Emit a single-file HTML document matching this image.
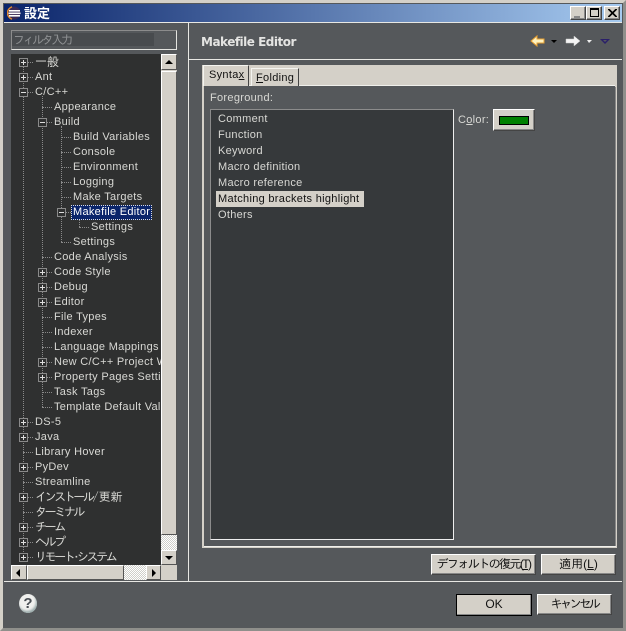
<!DOCTYPE html>
<html><head><meta charset="utf-8">
<style>
html,body{margin:0;padding:0;width:626px;height:631px;overflow:hidden;background:#55585b}
body{position:relative;font:12px "Liberation Sans","IPAGothic","Noto Sans CJK JP",sans-serif;color:#d8d8d4}
div{position:absolute;box-sizing:border-box}
.t{white-space:nowrap;height:15px;line-height:15px;font-size:11px;letter-spacing:.3px;margin-top:1px}
.k{letter-spacing:-2.4px;font-size:12px;font-family:"IPAGothic","Noto Sans CJK JP",sans-serif}
.j{letter-spacing:0;font-size:12px;font-family:"IPAGothic","Noto Sans CJK JP",sans-serif}
.btn{background:#d4d0c8;color:#111;text-align:center;white-space:nowrap;border:1px solid;border-color:#fff #444 #444 #fff;box-shadow:inset -1px -1px 0 #888}
.pm{width:9px;height:9px;border:1px solid #8a8a8a;background:#2f3030}
.pm:before{content:"";position:absolute;left:1px;top:3px;width:5px;height:1px;background:#ddd}
.pm.p:after{content:"";position:absolute;left:3px;top:1px;width:1px;height:5px;background:#ddd}
.h{height:1px;border-top:1px dotted #8a8a8a}
.v{width:1px;border-left:1px dotted #8a8a8a}
.sb{background:#d4d0c8;border:1px solid;border-color:#fff #555 #555 #fff}
u{text-decoration:underline}
</style></head><body>
<!-- frame -->
<div style="left:0;top:0;width:626px;height:631px;border:3px solid #d4d0c8;border-right-color:#8f8f8b;border-bottom-color:#8f8f8b"></div>
<div style="left:4px;top:4px;width:618px;height:18px;background:linear-gradient(90deg,#0a246a,#a6caf0)"></div>
<div style="left:4px;top:22px;width:618px;height:1px;background:#e8e8e4"></div>
<svg style="position:absolute;left:7px;top:6px" width="14" height="14" viewBox="0 0 14 14"><circle cx="7" cy="7" r="6.5" fill="#3a2a55"/><path d="M5 .8A6.5 6.5 0 0 0 5 13.2" stroke="#e08a30" stroke-width="1.4" fill="none"/><rect x="2" y="4" width="11" height="1.6" fill="#fff"/><rect x="1.5" y="6.5" width="12" height="1.6" fill="#fff"/><rect x="2" y="9" width="11" height="1.6" fill="#fff"/></svg>
<div style="left:24px;top:5px;height:16px;line-height:16px;font-size:13px;font-weight:bold;color:#fff;font-family:'Noto Sans CJK JP',sans-serif">設定</div>
<div class="btn" style="left:570px;top:6px;width:16px;height:14px"><div style="left:3px;top:9px;width:6px;height:2px;background:#888"></div></div>
<div class="btn" style="left:586px;top:6px;width:16px;height:14px"><div style="left:3px;top:1px;width:9px;height:9px;border:1px solid #000;border-top-width:2px"></div></div>
<div class="btn" style="left:604px;top:6px;width:16px;height:14px"><svg style="position:absolute;left:3px;top:2px" width="9" height="8"><path d="M0 0L8 8M1 0L9 8M8 0L0 8M9 0L1 8" stroke="#000" stroke-width="1"/></svg></div>

<!-- filter -->
<div style="left:11px;top:30px;width:166px;height:20px;border:1px solid;border-color:#8c8c8c #e4e4e0 #e4e4e0 #8c8c8c;background:#55585b"></div>
<div style="left:12px;top:33px;width:142px;height:13px;background:#484b4e"></div>
<div class="t" style="left:13px;top:32px;color:#8e9092"><span class="k">フィルタ入力</span></div>

<!-- tree -->
<div style="left:11px;top:54px;width:150px;height:511px;background:#2f3030"></div>
<div class="v" style="left:23px;top:66px;height:494px"></div>
<div class="v" style="left:42px;top:96px;height:311px"></div>
<div class="v" style="left:61px;top:126px;height:116px"></div>
<div class="v" style="left:79px;top:217px;height:10px"></div>
<div class="h" style="left:28px;top:62px;width:5px"></div>
<div class="h" style="left:28px;top:77px;width:5px"></div>
<div class="h" style="left:28px;top:92px;width:5px"></div>
<div class="h" style="left:42px;top:107px;width:10px"></div>
<div class="h" style="left:47px;top:122px;width:5px"></div>
<div class="h" style="left:61px;top:137px;width:10px"></div>
<div class="h" style="left:61px;top:152px;width:10px"></div>
<div class="h" style="left:61px;top:167px;width:10px"></div>
<div class="h" style="left:61px;top:182px;width:10px"></div>
<div class="h" style="left:61px;top:197px;width:10px"></div>
<div class="h" style="left:66px;top:212px;width:5px"></div>
<div class="h" style="left:79px;top:227px;width:10px"></div>
<div class="h" style="left:61px;top:242px;width:10px"></div>
<div class="h" style="left:42px;top:257px;width:10px"></div>
<div class="h" style="left:47px;top:272px;width:5px"></div>
<div class="h" style="left:47px;top:287px;width:5px"></div>
<div class="h" style="left:47px;top:302px;width:5px"></div>
<div class="h" style="left:42px;top:317px;width:10px"></div>
<div class="h" style="left:42px;top:332px;width:10px"></div>
<div class="h" style="left:42px;top:347px;width:10px"></div>
<div class="h" style="left:47px;top:362px;width:5px"></div>
<div class="h" style="left:47px;top:377px;width:5px"></div>
<div class="h" style="left:42px;top:392px;width:10px"></div>
<div class="h" style="left:42px;top:407px;width:10px"></div>
<div class="h" style="left:28px;top:422px;width:5px"></div>
<div class="h" style="left:28px;top:437px;width:5px"></div>
<div class="h" style="left:23px;top:452px;width:10px"></div>
<div class="h" style="left:28px;top:467px;width:5px"></div>
<div class="h" style="left:23px;top:482px;width:10px"></div>
<div class="h" style="left:28px;top:497px;width:5px"></div>
<div class="h" style="left:23px;top:512px;width:10px"></div>
<div class="h" style="left:28px;top:527px;width:5px"></div>
<div class="h" style="left:28px;top:542px;width:5px"></div>
<div class="h" style="left:28px;top:557px;width:5px"></div>

<div class="pm p" style="left:19px;top:58px"></div>
<div class="pm p" style="left:19px;top:73px"></div>
<div class="pm" style="left:19px;top:88px"></div>
<div class="pm" style="left:38px;top:118px"></div>
<div class="pm" style="left:57px;top:208px"></div>
<div class="pm p" style="left:38px;top:268px"></div>
<div class="pm p" style="left:38px;top:283px"></div>
<div class="pm p" style="left:38px;top:298px"></div>
<div class="pm p" style="left:38px;top:358px"></div>
<div class="pm p" style="left:38px;top:373px"></div>
<div class="pm p" style="left:19px;top:418px"></div>
<div class="pm p" style="left:19px;top:433px"></div>
<div class="pm p" style="left:19px;top:463px"></div>
<div class="pm p" style="left:19px;top:493px"></div>
<div class="pm p" style="left:19px;top:523px"></div>
<div class="pm p" style="left:19px;top:538px"></div>
<div class="pm p" style="left:19px;top:553px"></div>

<div class="t" style="left:35px;top:54px"><span class="j">一般</span></div>
<div class="t" style="left:35px;top:69px">Ant</div>
<div class="t" style="left:35px;top:84px">C/C++</div>
<div class="t" style="left:54px;top:99px">Appearance</div>
<div class="t" style="left:54px;top:114px">Build</div>
<div class="t" style="left:73px;top:129px">Build Variables</div>
<div class="t" style="left:73px;top:144px">Console</div>
<div class="t" style="left:73px;top:159px">Environment</div>
<div class="t" style="left:73px;top:174px">Logging</div>
<div class="t" style="left:73px;top:189px">Make Targets</div>
<div class="t" style="left:71px;top:204px;width:81px;background:#0a246a;color:#fff;outline:1px dotted #ddd;outline-offset:-1px;padding-left:2px">Makefile Editor</div>
<div class="t" style="left:91px;top:219px">Settings</div>
<div class="t" style="left:73px;top:234px">Settings</div>
<div class="t" style="left:54px;top:249px">Code Analysis</div>
<div class="t" style="left:54px;top:264px">Code Style</div>
<div class="t" style="left:54px;top:279px">Debug</div>
<div class="t" style="left:54px;top:294px">Editor</div>
<div class="t" style="left:54px;top:309px">File Types</div>
<div class="t" style="left:54px;top:324px">Indexer</div>
<div class="t" style="left:54px;top:339px">Language Mappings</div>
<div class="t" style="left:54px;top:354px;width:107px;overflow:hidden">New C/C++ Project Wizard</div>
<div class="t" style="left:54px;top:369px;width:107px;overflow:hidden">Property Pages Settings</div>
<div class="t" style="left:54px;top:384px">Task Tags</div>
<div class="t" style="left:54px;top:399px;width:107px;overflow:hidden">Template Default Values</div>
<div class="t" style="left:35px;top:414px">DS-5</div>
<div class="t" style="left:35px;top:429px">Java</div>
<div class="t" style="left:35px;top:444px">Library Hover</div>
<div class="t" style="left:35px;top:459px">PyDev</div>
<div class="t" style="left:35px;top:474px">Streamline</div>
<div class="t" style="left:35px;top:489px"><span class="k">インストール</span><span class="j">/更新</span></div>
<div class="t" style="left:35px;top:504px"><span class="k">ターミナル</span></div>
<div class="t" style="left:35px;top:519px"><span class="k">チーム</span></div>
<div class="t" style="left:35px;top:534px"><span class="k">ヘルプ</span></div>
<div class="t" style="left:35px;top:549px"><span class="k">リモート･システム</span></div>

<!-- v scrollbar -->
<div style="left:161px;top:54px;width:16px;height:526px;background:#d4d0c8"></div>
<div class="sb" style="left:161px;top:54px;width:16px;height:16px"><div style="left:3px;top:5px;border:4px solid transparent;border-top:0;border-bottom:4px solid #000"></div></div>
<div class="sb" style="left:161px;top:71px;width:16px;height:464px"></div>
<div style="left:161px;top:535px;width:16px;height:15px;background:repeating-conic-gradient(#fff 0 25%,#cfcfca 0 50%) 0 0/2px 2px"></div>
<div class="sb" style="left:161px;top:550px;width:16px;height:15px"><div style="left:3px;top:5px;border:4px solid transparent;border-bottom:0;border-top:4px solid #000"></div></div>
<!-- h scrollbar -->
<div style="left:11px;top:565px;width:150px;height:15px;background:#d4d0c8"></div>
<div class="sb" style="left:11px;top:565px;width:16px;height:15px"><div style="left:4px;top:3px;border:4px solid transparent;border-left:0;border-right:4px solid #000"></div></div>
<div class="sb" style="left:27px;top:565px;width:97px;height:15px"></div>
<div style="left:124px;top:565px;width:22px;height:15px;background:repeating-conic-gradient(#fff 0 25%,#cfcfca 0 50%) 0 0/2px 2px"></div>
<div class="sb" style="left:146px;top:565px;width:15px;height:15px"><div style="left:5px;top:3px;border:4px solid transparent;border-right:0;border-left:4px solid #000"></div></div>

<!-- sash + seps -->
<div style="left:188px;top:23px;width:1px;height:558px;background:#e8e8e4"></div>
<div style="left:189px;top:59px;width:433px;height:1px;background:#e8e8e4"></div>
<div style="left:4px;top:581px;width:618px;height:1px;background:#e8e8e4"></div>

<!-- header -->
<div style="left:201px;top:34px;white-space:nowrap;font:bold 12px/16px 'DejaVu Sans',sans-serif;color:#e4e4e2;letter-spacing:-.5px">Makefile Editor</div>
<svg style="position:absolute;left:528px;top:33px" width="90" height="16" viewBox="0 0 90 16">
<path d="M3 8L9 3V6H16V10H9V13Z" fill="#fff3c0" stroke="#e8a030" stroke-width="1"/>
<path d="M23 7H29L26 10Z" fill="#000"/>
<path d="M52 8L46 3V6H38V10H46V13Z" fill="#f4f4f4" stroke="#ccc" stroke-width=".5"/>
<path d="M59 7H64L61 10Z" fill="#eee"/>
<path d="M72 6H82L77 11Z" fill="#2a1f6a"/>
<path d="M75 7H79L77 9Z" fill="#55585b"/>
</svg>

<!-- tab folder -->
<div style="left:202px;top:65px;width:415px;height:22px;background:#d4d0c8"></div>
<div style="left:202px;top:86px;width:415px;height:462px;border:2px solid #d4d0c8;border-top:0;background:#55585b"></div>
<div style="left:203px;top:85px;width:412px;height:1px;background:#f0f0ec"></div>
<div style="left:615px;top:87px;width:1px;height:459px;background:#888"></div>
<div style="left:204px;top:546px;width:412px;height:1px;background:#f0f0ec"></div>
<div style="left:203px;top:65px;width:46px;height:21px;background:#d4d0c8;border:1px solid #f4f4f0;border-right-color:#444;border-bottom:0"></div>
<div class="t" style="left:209px;top:67px;color:#111">Synta<u>x</u></div>
<div style="left:251px;top:68px;width:48px;height:18px;background:#d4d0c8;border:1px solid #f4f4f0;border-right-color:#444;border-bottom:0"></div>
<div class="t" style="left:256px;top:70px;color:#111"><u>F</u>olding</div>

<div class="t" style="left:210px;top:90px">Fore<u>g</u>round:</div>

<!-- list -->
<div style="left:210px;top:109px;width:244px;height:431px;background:#36393b;border:1px solid;border-color:#8c8c8c #eee #eee #8c8c8c"></div>
<div class="t" style="left:218px;top:111px">Comment</div>
<div class="t" style="left:218px;top:127px">Function</div>
<div class="t" style="left:218px;top:143px">Keyword</div>
<div class="t" style="left:218px;top:159px">Macro definition</div>
<div class="t" style="left:218px;top:175px">Macro reference</div>
<div style="left:216px;top:191px;width:148px;height:16px;background:#d4d0c8"></div>
<div class="t" style="left:218px;top:191px;color:#111">Matching brackets highlight</div>
<div class="t" style="left:218px;top:207px">Others</div>

<div class="t" style="left:458px;top:112px">C<u>o</u>lor:</div>
<div class="btn" style="left:493px;top:109px;width:42px;height:22px"><div style="left:5px;top:6px;width:30px;height:9px;background:#008000;border:1px solid #000"></div></div>

<!-- buttons -->
<div class="btn" style="left:431px;top:554px;width:105px;height:21px;line-height:18px;letter-spacing:-1.6px;font-size:12px">デフォルトの復元(<u>T</u>)</div>
<div class="btn" style="left:541px;top:554px;width:75px;height:21px;line-height:18px">適用(<u>L</u>)</div>
<div class="btn" style="left:456px;top:594px;width:76px;height:22px;line-height:19px;outline:1px solid #000;outline-offset:-1px">OK</div>
<div class="btn" style="left:537px;top:594px;width:75px;height:21px;line-height:18px"><span class="k">キャンセル</span></div>

<!-- help -->
<div style="left:19px;top:594px;width:18px;height:19px;border-radius:50%;background:#f0f0ee;box-shadow:inset -1px -2px 2px #9aa"></div>
<div style="left:19px;top:594px;width:18px;height:19px;text-align:center;font:bold 15px/19px 'Liberation Sans',sans-serif;color:#4a4f55">?</div>
</body></html>
